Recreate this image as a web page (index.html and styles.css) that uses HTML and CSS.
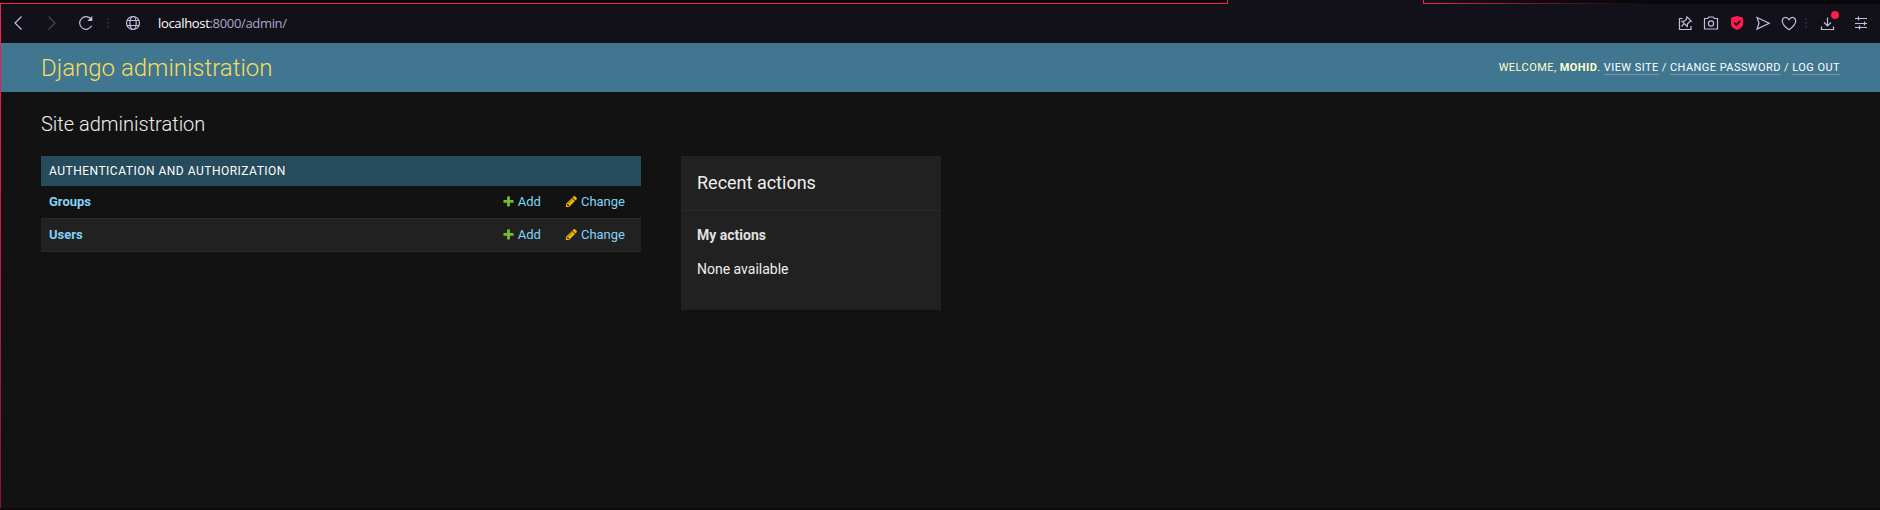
FILE: index.html
```html
<!DOCTYPE html>
<html lang="en">
<head>
<meta charset="utf-8">
<title>Site administration | Django site admin</title>
<link rel="stylesheet" href="styles.css">
</head>
<body>
<svg class="sprite" aria-hidden="true">
  <symbol id="plus" viewBox="0 0 1792 1792"><path fill="#70bf2b" d="M1600 796v192q0 40-28 68t-68 28h-416v416q0 40-28 68t-68 28h-192q-40 0-68-28t-28-68v-416h-416q-40 0-68-28t-28-68v-192q0-40 28-68t68-28h416v-416q0-40 28-68t68-28h192q40 0 68 28t28 68v416h416q40 0 68 28t28 68z"/></symbol>
  <symbol id="pencil" viewBox="0 0 1792 1792"><path fill="#efb80b" d="M491 1536l91-91-235-235-91 91v107h128v128h107zm523-928q0-22-22-22-10 0-17 7l-542 542q-7 7-7 17 0 22 22 22 10 0 17-7l542-542q7-7 7-17zm-54-192l416 416-832 832h-416v-416zm683 96q0 53-37 90l-166 166-416-416 166-165q36-38 90-38 53 0 91 38l235 234q37 39 37 91z"/></symbol>
</svg>
<div class="window">
  <div class="tabstrip"><span class="edge edge-left"></span><span class="tab"></span><span class="edge edge-right"></span></div>
  <div class="toolbar">
    <div class="nav">
      <svg class="icon" viewBox="0 0 16 16"><path d="M11.500 1.500 5 8l6.500 6.500"/></svg>
      <svg class="icon dim" viewBox="0 0 16 16"><path d="M4.500 1.500 11 8l-6.500 6.500"/></svg>
      <svg class="icon reload" viewBox="0 0 16 16"><path d="M13.600 10.800A6.300 6.300 0 1 1 13 4.200"/><path d="M14.300 1v5H9.300z" fill="currentColor" stroke="none"/></svg>
      <span class="dots"></span>
      <svg class="icon globe" viewBox="0 0 16 16"><circle cx="8" cy="8" r="6.500"/><ellipse cx="8" cy="8" rx="3.200" ry="6.500"/><path d="M2 5.500h12M2 10.500h12"/></svg>
    </div>
    <div class="address"><b>localhost</b><span>:8000/admin/</span></div>
    <div class="actions">
      <svg class="icon" viewBox="0 0 16 16"><path d="M5.500 3.500h-3v11h11.500v-3.500"/><path d="M10 1.800l4.300 4.300-1.500.4-2.300 2.300-.3 2.700L5 6.300l2.700-.3L9.700 3.700zM7.300 8.700 4.500 11.500"/></svg>
      <svg class="icon" viewBox="0 0 16 16"><path d="M1.500 3.500h3.200l1-1.500h4.600l1 1.500h3.200v10.500h-13z"/><circle cx="8" cy="8.500" r="2.600"/></svg>
      <svg class="icon" viewBox="0 0 16 16"><path d="M8 1 3 2.300Q2 2.700 2 4v5.500q0 3 6 5.500 6-2.500 6-5.500V4q0-1.300-1-1.700z" fill="#ff1b4b" stroke="none"/><path d="M5 7.500 7.300 10l3.900-4.200" stroke="#121019" stroke-width="1.700"/></svg>
      <svg class="icon" viewBox="0 0 16 16"><path d="M2 2.500 14.200 8.200 2 14l2-5.800z"/></svg>
      <svg class="icon" viewBox="0 0 16 16"><path d="M8 14.800C4 12 1.300 9 1.300 6 1.300 2 6 1 8 4.800 10 1 14.700 2 14.700 6 14.700 9 12 12 8 14.800z"/></svg>
      <span class="dots"></span>
      <span class="download"><svg class="icon" viewBox="0 0 16 16"><path d="M8.500 2.500v8.500M5 7.500 8.500 11 12 7.500M2.500 11.500v3h12v-3"/></svg><i class="badge"></i></span>
      <svg class="icon" viewBox="0 0 16 16"><path d="M2 3.500h12M2 8.500h12M2 12.500h12M5.500 1.500v4M11.500 6.500v4M6.500 10.500v4"/></svg>
    </div>
  </div>
  <header class="header">
    <h1 class="brand">Django administration</h1>
    <div class="user-tools">Welcome, <strong>Mohid</strong>. <a>View site</a> / <a>Change password</a> / <a>Log out</a></div>
  </header>
  <main class="content">
    <h2 class="title">Site administration</h2>
    <div class="columns">
      <section class="module">
        <h3 class="caption">Authentication and Authorization</h3>
        <div class="row"><b>Groups</b><a class="add"><svg class="mark"><use href="#plus"/></svg>Add</a><a class="change"><svg class="mark"><use href="#pencil"/></svg>Change</a></div>
        <div class="row alt"><b>Users</b><a class="add"><svg class="mark"><use href="#plus"/></svg>Add</a><a class="change"><svg class="mark"><use href="#pencil"/></svg>Change</a></div>
      </section>
      <aside class="recent">
        <h3 class="recent-title">Recent actions</h3>
        <h4 class="recent-sub">My actions</h4>
        <p class="recent-text">None available</p>
      </aside>
    </div>
  </main>
</div>
</body>
</html>
```
FILE: styles.css
```css
* { box-sizing: border-box; }
body { margin: 0; background: #121212; font-family: Roboto, sans-serif; color: #eee; }
h1, h2, h3, h4, p { margin: 0; }
.sprite { display: none; }
.window { position: relative; height: 510px; padding-left: 1px; border-bottom: 2px solid #0d0a10; overflow: hidden; }
.window::before { content: ""; position: absolute; left: 0; top: 3px; bottom: -2px; width: 1px; background: linear-gradient(#fa1e4e, #c8193f 50%, #8a1230); }
.tabstrip { display: flex; height: 4px; margin-left: -1px; background: #121019; }
.edge { background: #09080b; }
.edge-left { width: 1228px; border-right: 1px solid #fa1e4e; border-bottom: 1px solid #fa1e4e; }
.tab { width: 195px; }
.edge-right { flex: 1; border-left: 1px solid #fa1e4e; background: linear-gradient(90deg, #fa1e4e, #09080b 225px) bottom / 100% 1px no-repeat, linear-gradient(90deg, #121019, #09080b 200px); }
.toolbar { display: flex; align-items: center; height: 39px; padding: 0 11px 1px 9px; background: #121019; color: #c5bede; }
.nav { display: flex; align-items: center; }
.nav .icon { margin-right: 18px; }
.nav .reload { margin-right: 13px; }
.nav .dots { margin-right: 16px; }
.nav .globe { margin-right: 17px; }
.icon { display: block; width: 16px; height: 16px; fill: none; stroke: currentColor; stroke-width: 1.2; }
.dim { color: #4a4656; }
.dots { width: 2px; height: 10px; background: repeating-linear-gradient(#2b2835 0 2px, transparent 2px 4px); }
.address { font: 13px/18px "Open Sans", sans-serif; color: #aea7c4; letter-spacing: -.33px; }
.address b { font-weight: 400; color: #fff; }
.actions { display: flex; align-items: center; margin-left: auto; gap: 10px; }
.actions .dots { margin: 0 2px 0 -2px; }
.download { position: relative; margin-right: 8px; }
.badge { position: absolute; left: 12px; top: -4px; width: 8px; height: 8px; border-radius: 50%; background: #ff1b4b; }
.header { display: flex; align-items: center; justify-content: space-between; height: 49px; padding: 0 40px; background: #417690; color: #ffc; }
.brand { font-size: 24px; font-weight: 300; line-height: 28px; color: #f5dd5d; }
.user-tools { font-size: 11px; line-height: 15px; font-weight: 400; letter-spacing: .44px; text-transform: uppercase; }
.user-tools strong { font-weight: 700; }
.user-tools a { color: #fff; border-bottom: 1px solid rgba(255,255,255,.25); }
.content { padding: 20px 40px; }
.title { font-size: 20px; line-height: 24px; font-weight: 300; margin-bottom: 20px; }
.columns { display: flex; gap: 40px; align-items: flex-start; }
.module { width: 600px; }
.caption { height: 30px; padding: 0 8px; background: #264b5d; font-size: 12px; font-weight: 400; line-height: 30px; letter-spacing: .5px; text-transform: uppercase; color: #fff; }
.row { display: flex; align-items: center; height: 33px; padding: 0 16px 1px 8px; border-bottom: 1px solid #2a2a2a; font-size: 13px; line-height: 17px; color: #81d4fa; }
.row b { flex: 1; }
.alt { background: #212121; }
.row a { display: flex; align-items: center; gap: 3px; }
.change { margin-left: 24px; }
.mark { width: 13px; height: 13px; }
.recent { width: 260px; height: 154px; background: #212121; }
.recent-title { height: 55px; padding: 0 16px; border-bottom: 1px solid #2a2a2a; font-size: 18px; font-weight: 400; line-height: 54px; }
.recent-sub { margin: 16px 16px 0; font-size: 14px; line-height: 17px; font-weight: 700; color: #e0e0e0; }
.recent-text { margin: 17px 16px 0; font-size: 14px; line-height: 17px; }
```
